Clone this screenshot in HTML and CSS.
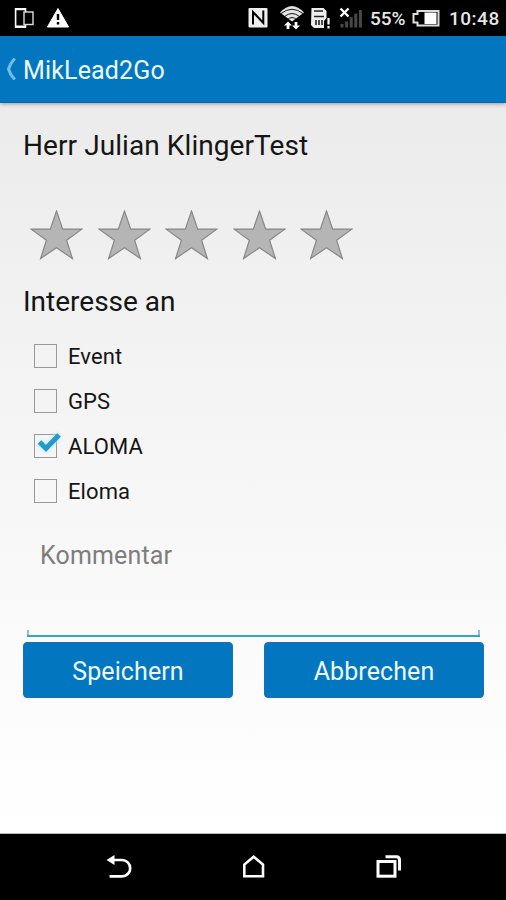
FILE: index.html
```html
<!DOCTYPE html>
<html lang="de">
<head>
<meta charset="utf-8">
<title>MikLead2Go</title>
<link rel="stylesheet" href="styles.css">
</head>
<body>
<div class="screen">
  <div class="status">
    <svg class="s-left" width="60" height="36" viewBox="12 0 60 36">
      <path d="M25.5 12V8.7H15.6V27H25.5V24" fill="none" stroke="#fff" stroke-width="1.6"/>
      <path d="M15 9.2h11M15 26.7h11" stroke="#fff" stroke-width="2.2"/>
      <rect x="24" y="12" width="9" height="12.5" fill="#000" stroke="#ddd" stroke-width="1.4"/>
      <path d="M58 8.5L68.6 27H47.4Z" fill="#fff" stroke="#fff" stroke-linejoin="round"/>
      <path d="M58 14v6M58 22v2.6" stroke="#000" stroke-width="2.4"/>
    </svg>
    <svg class="s-right" width="120" height="36" viewBox="246 0 120 36">
      <rect x="248.500" y="8" width="19" height="19.500" rx="1" fill="#eee"/>
      <path d="M253 24.500V12L263.300 23V10.500" fill="none" stroke="#000" stroke-width="2"/>
      <path d="M280 12.5Q292 -0.500 304 12.500L292 21.500Z" fill="#e4e4e4"/>
      <path d="M281 13.500Q292 5 303 13.500M284.500 16.500Q292 10.500 299.500 16.500M287.500 19.500Q292 15.500 296.500 19.500" fill="none" stroke="#000" stroke-width="0.900"/>
      <path d="M288 21.500l4 4h-2.600v3.500h-2.800v-3.500H284zM296 29.500l-4-4h2.600V22h2.800v3.500h2.600z" fill="#fff"/>
      <path d="M311.500 8H323.500L326.500 11V18L324 21V28H314L311 25Z" fill="#eee"/>
      <path d="M314 11H323M314 16.500H324M316 20v5M319 20v5M322 20v5" stroke="#222" stroke-width="1.600"/>
      <path d="M328.500 18v6.500M328.500 26v2.500" stroke="#fff" stroke-width="2.200"/>
      <path d="M340.500 8.500l8 8M348.500 8.500l-8 8" stroke="#fff" stroke-width="2.300"/>
      <path d="M342 24v3.500M346.600 21.500v6M351.200 17v10.500M355.800 13.500v14M360.400 10v17.500" stroke="#484848" stroke-width="3"/>
    </svg>
    <span class="percent">55%</span>
    <svg class="battery" width="30" height="36" viewBox="411 0 30 36">
      <path d="M417.500 11H438.500V25.500H417.500V22.500H413.500V14H417.500Z" fill="#000" stroke="#ddd" stroke-width="2"/>
      <rect x="424.500" y="12.500" width="12" height="11.500" fill="#fff"/>
    </svg>
    <span class="clock">10:48</span>
  </div>
  <header class="bar">
    <svg width="10" height="22" viewBox="0 0 10 22"><path d="M8.800 0.500Q4 5.500 2.500 11Q4 16.500 8.800 21.500" fill="none" stroke="#76bbe6" stroke-width="3"/></svg>
    <h1>MikLead2Go</h1>
  </header>
  <main>
    <h2 class="name">Herr Julian KlingerTest</h2>
    <div class="stars">
      <svg viewBox="0 0 54 51"><path d="M27 1L33.300 19.500H53L37.300 30.800L43.200 49.500L27 38.500L10.800 49.500L16.700 30.800L1 19.500H20.700Z"/></svg>
      <svg viewBox="0 0 54 51"><path d="M27 1L33.300 19.500H53L37.300 30.800L43.200 49.500L27 38.500L10.800 49.500L16.700 30.800L1 19.500H20.700Z"/></svg>
      <svg viewBox="0 0 54 51"><path d="M27 1L33.300 19.500H53L37.300 30.800L43.200 49.500L27 38.500L10.800 49.500L16.700 30.800L1 19.500H20.700Z"/></svg>
      <svg viewBox="0 0 54 51"><path d="M27 1L33.300 19.500H53L37.300 30.800L43.200 49.500L27 38.500L10.800 49.500L16.700 30.800L1 19.500H20.700Z"/></svg>
      <svg viewBox="0 0 54 51"><path d="M27 1L33.300 19.500H53L37.300 30.800L43.200 49.500L27 38.500L10.800 49.500L16.700 30.800L1 19.500H20.700Z"/></svg>
    </div>
    <h2 class="section">Interesse an</h2>
    <div class="options">
      <div class="option"><span class="box"></span><span>Event</span></div>
      <div class="option"><span class="box"></span><span>GPS</span></div>
      <div class="option"><span class="box"><svg class="check" width="26" height="22" viewBox="0 0 26 22"><path d="M3.500 10L10 16.500L23 3" fill="none" stroke="#1f9ccb" stroke-width="5"/></svg></span><span>ALOMA</span></div>
      <div class="option"><span class="box"></span><span>Eloma</span></div>
    </div>
    <div class="comment"><span>Kommentar</span></div>
    <div class="buttons">
      <div class="btn save"><span>Speichern</span></div>
      <div class="btn cancel"><span>Abbrechen</span></div>
    </div>
  </main>
  <nav>
    <svg width="26" height="26" viewBox="106 854 26 26"><path d="M111 860H122A8.200 8.200 0 0 1 122 876.400H109.500" fill="none" stroke="#fff" stroke-width="2.700"/><path d="M106.500 860L114.500 855V865Z" fill="#fff"/></svg>
    <svg width="26" height="26" viewBox="241 854 26 26"><path d="M244.300 876.200V864.500L253.700 856.700L263 864.500V876.200Z" fill="none" stroke="#fff" stroke-width="2.600"/></svg>
    <svg width="26" height="26" viewBox="376 854 26 26"><rect x="378" y="861.500" width="17" height="14.700" fill="none" stroke="#fff" stroke-width="3"/><path d="M385.500 856.700H396.500Q399.500 856.700 399.500 860V870.500" fill="none" stroke="#fff" stroke-width="3"/></svg>
  </nav>
</div>
</body>
</html>
```
FILE: styles.css
```css
* { box-sizing: border-box; }
body { margin: 0; font-family: Roboto, "Noto Sans", sans-serif; background: #000; }
svg { display: block; flex: none; }
h1, h2 { margin: 0; font-weight: 400; white-space: nowrap; }
.screen { width: 506px; height: 900px; overflow: hidden; display: flex; flex-direction: column; }
.status { height: 36px; flex: none; display: flex; align-items: center; padding-left: 12px; background: #000; color: #e6e6e6; }
.s-right { margin-left: 174px; }
.percent, .clock { font-size: 19px; line-height: 36px; padding-top: 1px; font-weight: 500; white-space: nowrap; }
.percent { width: 37px; margin-left: 4px; }
.battery { margin-left: 4px; }
.clock { margin-left: 8px; letter-spacing: 0.5px; }
.bar { height: 67px; flex: none; display: flex; align-items: center; padding: 0 0 0 6px; gap: 7px; background: #0277bf; border-bottom: 1px solid #0869a5; color: #edf7ff; position: relative; z-index: 1; box-shadow: 0 1px 4px rgba(0,0,0,.35); }
.bar h1 { font-size: 25px; line-height: 32px; padding-top: 4px; letter-spacing: 0.15px; }
main { height: 731px; flex: none; padding: 25px 22px 0 23px; background: linear-gradient(#ebebeb, #f2f2f2 30%, #fafafa 70%, #fff); border-bottom: 1px solid #bbb; color: #151515; }
.name { font-size: 28px; line-height: 36px; letter-spacing: 0.08px; }
.stars { display: flex; gap: 14.500px; margin: 46px 0 0 7px; }
.stars svg { width: 53px; height: 50px; }
.stars path { fill: #b5b5b5; stroke: #868686; stroke-width: 1.2; }
.section { font-size: 28px; line-height: 36px; margin-top: 24px; }
.options { margin: 14px 0 0 11px; }
.option { height: 45px; display: flex; align-items: center; font-size: 22px; gap: 11px; letter-spacing: 0.1px; }
.box { width: 23px; height: 24px; margin-bottom: 2px; border: 1px solid #999; flex: none; position: relative; }
.check { position: absolute; left: 1px; top: -3px; filter: drop-shadow(0 0 2px #b7e6f6); }
.comment { margin: 10px 4px 0 4px; width: 453px; height: 113px; padding: 16px 0 0 13px; color: #7d7d7d; font-size: 25px; line-height: 32px; letter-spacing: 0.15px; border-bottom: 2px solid #35a5c7; position: relative; }
.comment::before, .comment::after { content: ""; position: absolute; bottom: 0; width: 2px; height: 5px; background: #8fc2d1; }
.comment::before { left: 0; }
.comment::after { right: 0; }
.buttons { display: flex; gap: 31px; margin-top: 5px; }
.btn { height: 56px; border-radius: 4px; background: #0277bf; border: 1px solid #1a70b8; color: #edf7ff; font-size: 25px; letter-spacing: 0.1px; display: flex; align-items: center; justify-content: center; padding-top: 2px; }
.save { width: 210px; }
.cancel { width: 220px; }
nav { flex: 1; display: flex; gap: 109px; padding: 20px 0 0 106px; background: #000; }
```
